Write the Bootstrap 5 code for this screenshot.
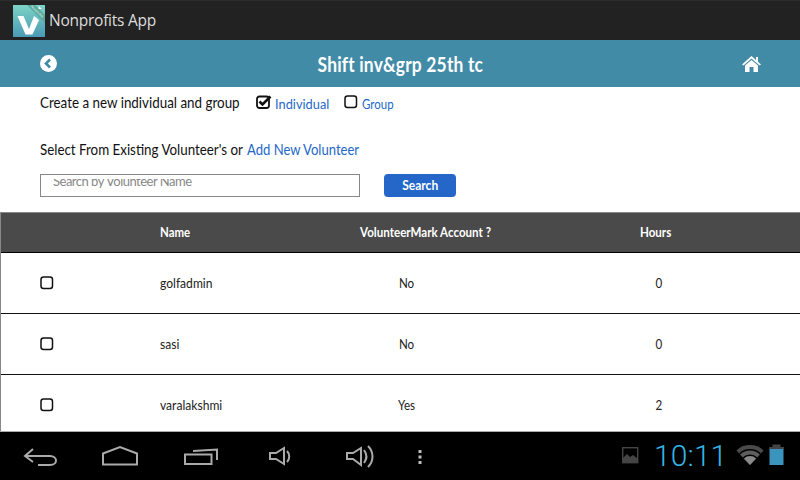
<!DOCTYPE html>
<html lang="en">
<head>
<meta charset="utf-8">
<title>Nonprofits App</title>
<link rel="stylesheet" href="https://cdn.jsdelivr.net/npm/bootstrap@5.3.0/dist/css/bootstrap.min.css">
<style>
html,body{margin:0;height:480px;overflow:hidden;background:#fff}
body{font-family:"Lato","Liberation Sans",sans-serif;color:#111}
.shell{height:480px;width:800px}
.app-bar{height:40px;background:#222;border-top:1px solid #2c2c2c;padding-left:13px;gap:4px;flex:none}
.app-title{font-family:"Open Sans",sans-serif;font-size:15.5px;color:#ddd;letter-spacing:-.25px}
.head-bar{height:47px;background:#428ba7;padding:0 40px;position:relative;flex:none}
.head-title{font-size:20.5px;font-weight:700;color:#fff;letter-spacing:.2px;position:absolute;left:0;right:0;text-align:center;top:10px;line-height:28px}
.head-title .sq-mid{transform:scaleX(.85)}
.head-home{margin-right:-1px}
.main-area{min-height:0;overflow:hidden;background:#fff}
.sq-left{display:inline-block;white-space:nowrap;transform-origin:0 50%}
.sq-mid{display:inline-block;white-space:nowrap;transform:scaleX(.89)}
.w-create{width:200px;transform:scaleX(.893)}
.w-ind{width:54px;transform:scaleX(.915)}
.w-grp{width:32px;transform:scaleX(.82)}
.w-sel{width:203px;transform:scaleX(.89)}
.w-add{width:112px;transform:scaleX(.87)}
.w-name{transform:scaleX(.88)}
.w-cell{transform:scaleX(.93)}
.line-one{height:30px;padding-left:40px;font-size:15px}
.line-one .lnk{font-size:14px;color:#2467c9;margin-top:2px}
.opt-first{margin-left:16px;margin-right:3px}
.opt-second{margin-left:15px;margin-right:4px}
.line-two{height:30px;margin-top:17px;padding-left:40px;font-size:15px}
.line-two a{color:#2467c9;text-decoration:none}
.search-row{padding-left:40px;margin-top:10px;height:23px;gap:24px;margin-bottom:15px}
.search-wrap{position:relative;width:320px;height:23px}
.search-wrap::before{content:"";position:absolute;left:1px;right:1px;top:1px;height:4px;background:#fff;z-index:2}
.search-box{display:block;width:320px;height:23px;border:1px solid #888;border-radius:0;padding:0 12px 10px;font-size:13px;font-family:inherit;letter-spacing:-.5px;outline:0;background:#fff}
.search-box::placeholder{color:#888;opacity:1}
.search-btn{width:72px;height:23px;padding:0;background:#2467c9;color:#fff;border:0;border-radius:4px;font-size:13.5px;font-weight:700;line-height:23px}
.vol-table{table-layout:fixed;width:800px;margin:0;border-collapse:separate;border-spacing:0;border-top:1px solid #888;border-left:1px solid #888;font-size:13px}
.vol-table th{background:#4a4a4a;color:#fff;height:40px;font-weight:700;font-size:13px;padding:0;vertical-align:middle;border-bottom:1px solid #000}
.vol-table td{height:61px;padding:2px 0 0;vertical-align:middle;border-bottom:1px solid #111;color:#222}
.vol-table td.col-check{padding:0 0 0 39px}
.vol-table th.col-check{padding-left:39px}
.col-check{width:159px}
.col-name{width:160px}
.col-acct{width:212px}
.col-hours{width:268px}
.vol-table th.col-hours{padding-right:20px}
.vol-table td.cell-acct{padding-right:38px}
.vol-table td.cell-hours{padding-right:14px}
.nav-strip{height:49px;background:#000;border-top:1px solid #aaa;position:relative;flex:none}
.nav-ico{position:absolute;top:0;left:0}
.clock{position:absolute;left:654px;top:5px;font-family:"Roboto",sans-serif;font-weight:300;font-size:30px;line-height:38px;color:#33b5e5;letter-spacing:.1px}
.box-ico{display:block;flex:none}
</style>
</head>
<body>
<div class="shell d-flex flex-column">
  <div class="app-bar d-flex align-items-center">
    <svg width="32" height="32" viewBox="0 0 32 32" class="box-ico">
      <defs><linearGradient id="lg" x1="0" y1="0" x2="0" y2="1"><stop offset="0" stop-color="#7dd3c6"/><stop offset="1" stop-color="#4a9ab5"/></linearGradient></defs>
      <rect width="32" height="32" fill="url(#lg)"/>
      <path d="M14 0 L32 18 L32 10 L22 0Z" fill="#5aa89a"/>
      <text x="0" y="0" transform="translate(17.500 1.500) rotate(45)" font-size="3.500" fill="#dff3ee" font-family="Lato,sans-serif">Nonprofits</text>
      <path d="M4.500 11 L10.500 11 L16 24 L21 11 L26 15 L19.500 29.500 L12.500 29.500Z" fill="#fff"/>
      <path d="M26 1.500 L29 4 L25.500 4Z" fill="#fff"/>
    </svg>
    <span class="app-title">Nonprofits App</span>
  </div>
  <div class="head-bar d-flex align-items-center justify-content-between">
    <svg width="17" height="17" viewBox="0 0 17 17" class="box-ico"><circle cx="8.500" cy="8.500" r="8.500" fill="#fff"/><path d="M10 4.500 L6 8.500 L10 12.500" fill="none" stroke="#428ba7" stroke-width="2.600"/></svg>
    <div class="head-title"><span class="sq-mid">Shift inv&amp;grp 25th tc</span></div>
    <svg width="19" height="16" viewBox="0 0 19 16" class="box-ico head-home"><path d="M9.500 0 L14 4 L14 1 L16 1 L16 5.800 L19 8.500 L17.500 9.500 L9.500 2.500 L1.500 9.500 L0 8.500Z M3 9.500 L9.500 4 L16 9.500 L16 16 L11.500 16 L11.500 11 L7.500 11 L7.500 16 L3 16Z" fill="#fff"/></svg>
  </div>
  <div class="main-area flex-grow-1">
    <div class="line-one d-flex align-items-center">
      <span class="sq-left w-create">Create a new individual and group</span>
      <svg width="16" height="14" viewBox="0 0 16 14" class="box-ico opt-first"><rect x="1" y="1.500" width="12" height="11.500" rx="2.500" fill="none" stroke="#111" stroke-width="1.800"/><path d="M3.500 6.500 L6.500 9.500 L14.500 1.500" fill="none" stroke="#111" stroke-width="2.600"/></svg>
      <span class="lnk sq-left w-ind">Individual</span>
      <svg width="14" height="14" viewBox="0 0 14 14" class="box-ico opt-second"><rect x="1" y="1" width="11.500" height="11.500" rx="2.500" fill="none" stroke="#111" stroke-width="1.500"/></svg>
      <span class="lnk sq-left w-grp">Group</span>
    </div>
    <div class="line-two d-flex align-items-center gap-1">
      <span class="sq-left w-sel">Select From Existing Volunteer's or</span><a href="#" class="sq-left w-add">Add New Volunteer</a>
    </div>
    <div class="search-row d-flex">
      <div class="search-wrap"><input class="search-box" type="text" placeholder="Search by Volunteer Name"></div>
      <button class="btn search-btn" type="button"><span class="sq-mid">Search</span></button>
    </div>
    <table class="vol-table">
      <thead>
        <tr><th class="col-check"></th><th class="col-name"><span class="sq-left w-name">Name</span></th><th class="col-acct text-center"><span class="sq-mid">VolunteerMark Account ?</span></th><th class="col-hours text-center"><span class="sq-mid">Hours</span></th></tr>
      </thead>
      <tbody>
        <tr><td class="col-check"><svg width="14" height="14" viewBox="0 0 14 14" class="box-ico"><rect x="1" y="1" width="11.500" height="11.500" rx="2.500" fill="none" stroke="#111" stroke-width="1.500"/></svg></td><td><span class="sq-left w-cell">golfadmin</span></td><td class="text-center cell-acct"><span class="sq-mid">No</span></td><td class="text-center cell-hours"><span class="sq-mid">0</span></td></tr>
        <tr><td class="col-check"><svg width="14" height="14" viewBox="0 0 14 14" class="box-ico"><rect x="1" y="1" width="11.500" height="11.500" rx="2.500" fill="none" stroke="#111" stroke-width="1.500"/></svg></td><td><span class="sq-left w-cell">sasi</span></td><td class="text-center cell-acct"><span class="sq-mid">No</span></td><td class="text-center cell-hours"><span class="sq-mid">0</span></td></tr>
        <tr><td class="col-check"><svg width="14" height="14" viewBox="0 0 14 14" class="box-ico"><rect x="1" y="1" width="11.500" height="11.500" rx="2.500" fill="none" stroke="#111" stroke-width="1.500"/></svg></td><td><span class="sq-left w-cell">varalakshmi</span></td><td class="text-center cell-acct"><span class="sq-mid">Yes</span></td><td class="text-center cell-hours"><span class="sq-mid">2</span></td></tr>
      </tbody>
    </table>
  </div>
  <div class="nav-strip">
    <svg class="nav-ico" width="800" height="49" viewBox="0 432 800 49" fill="none" stroke="#aaa" stroke-width="2">
      <path d="M33 449 L25 456 L33 462 M25 456 L50 456 C58 456 58 465 50 465 L38 465"/>
      <path d="M103 464.500 L137 464.500 L137 453.500 L120 447 L103 453.500Z"/>
      <path d="M185 454.500 L211.500 454.500 L211.500 464 L185 464Z M193 451 L217 449.500 L217 460"/>
      <path d="M270 453 L276 453 L284 448 L284 464 L276 459 L270 459Z M287 451 C290 454 290 459 287 462"/>
      <path d="M347 453 L353 453 L361 448 L361 465 L353 459 L347 459Z M364 450 C367 454 367 459 364 463 M368 446 C374 452 374 461 368 467"/>
      <path d="M420 450 L420 453 M420 455.500 L420 458.500 M420 461 L420 464" stroke-width="3" stroke="#bbb"/>
      <rect x="622.700" y="447.700" width="15" height="15" stroke="#444" stroke-width="1.400"/>
      <path d="M623 462 L623 458 L627 454 L630 457 L633 455 L637 458 L637 462Z" fill="#444" stroke="none"/>
      <path d="M736.400 450.400 A20 20 0 0 1 763.600 450.400 L750 465Z" fill="#4a4a4a" stroke="none"/>
      <path d="M739.100 453.300 A16 16 0 0 1 760.900 453.300 L750 465Z" fill="#000" stroke="none"/>
      <path d="M740.100 454.400 A14.500 14.500 0 0 1 759.900 454.400 L750 465Z" fill="#5e5e5e" stroke="none"/>
      <path d="M742.800 457.300 A10.500 10.500 0 0 1 757.200 457.300 L750 465Z" fill="#000" stroke="none"/>
      <path d="M743.900 458.400 A9 9 0 0 1 756.100 458.400 L750 465Z" fill="#8a8a8a" stroke="none"/>
      <rect x="769.500" y="447" width="14" height="18" fill="#3a94bd" stroke="none"/>
      <rect x="772.500" y="444.500" width="8" height="2.500" fill="#444" stroke="none"/>
      <rect x="769.500" y="447" width="14" height="2" fill="#444" stroke="none"/>
    </svg>
    <div class="clock">10:11</div>
  </div>
</div>
</body>
</html>
